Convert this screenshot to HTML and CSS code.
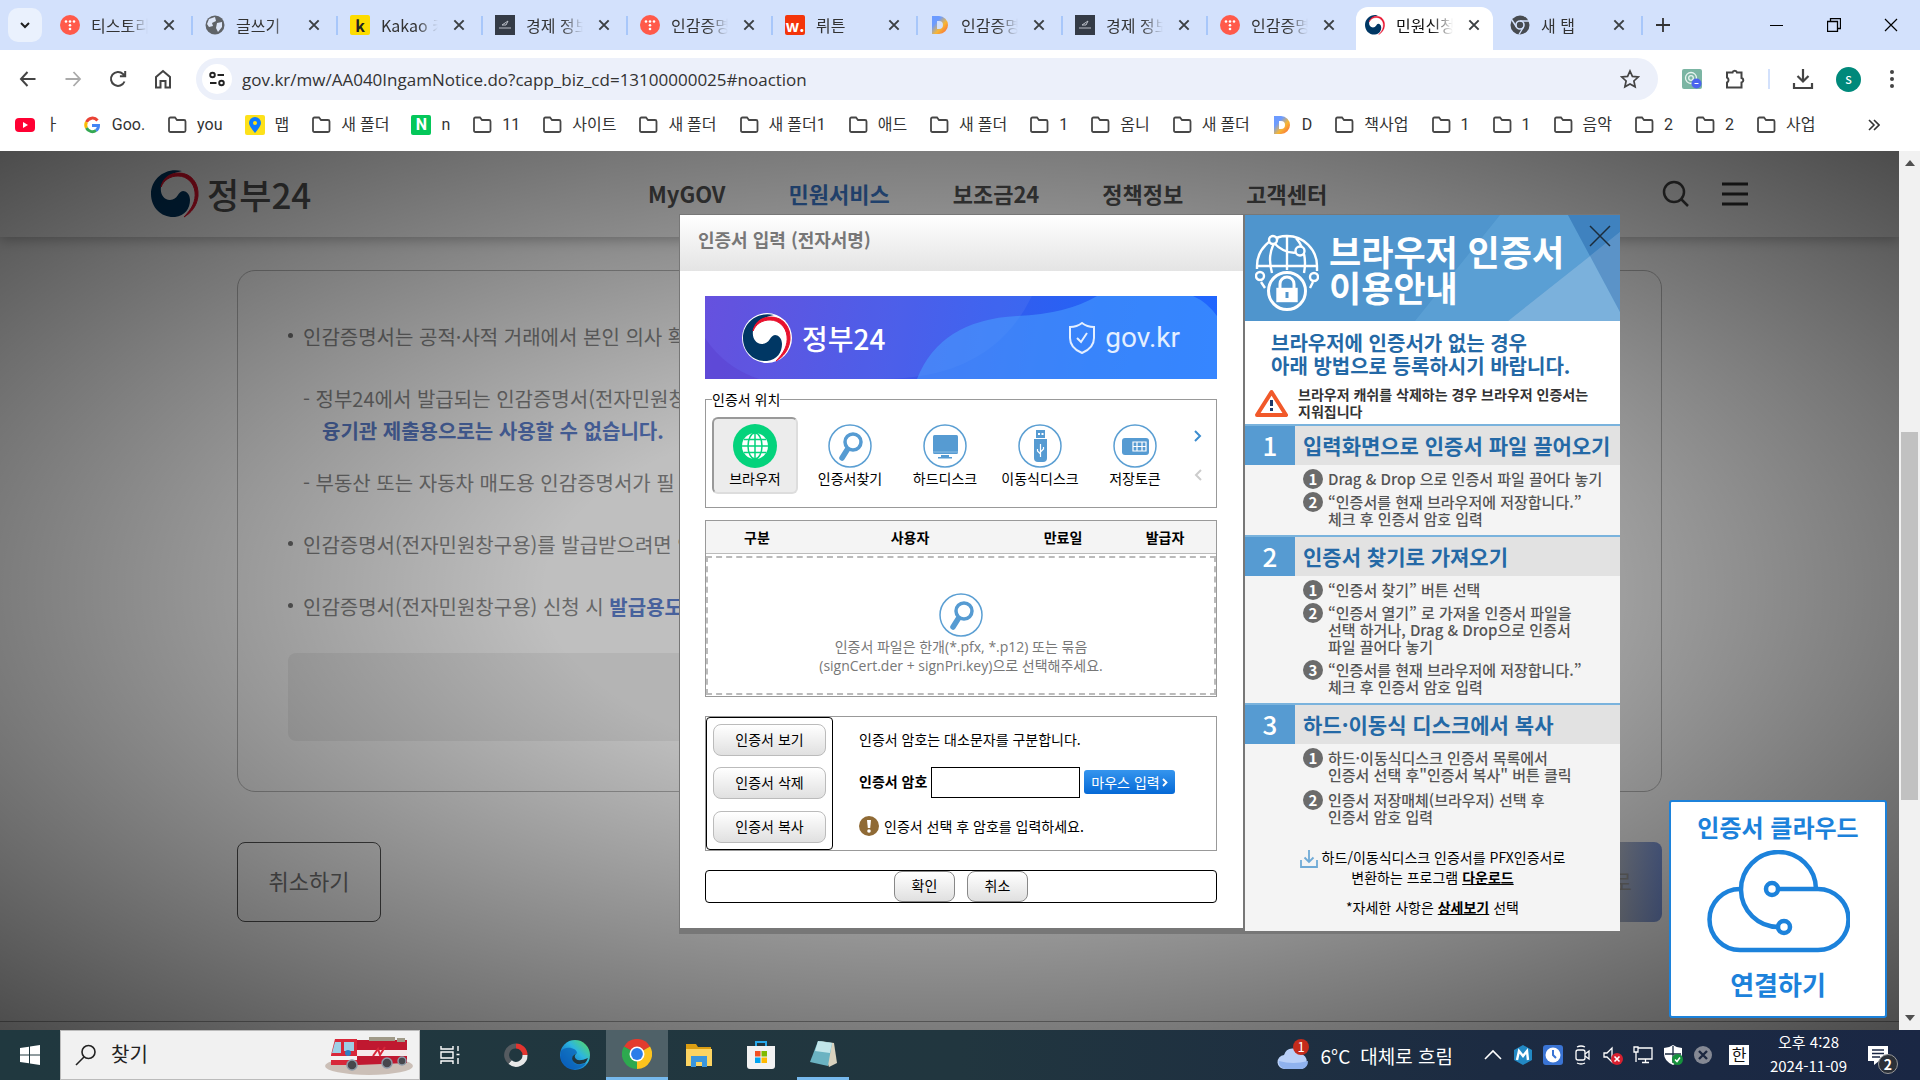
FILE: index.html
```html
<!DOCTYPE html>
<html lang="ko">
<head>
    <meta charset="UTF-8">
    <meta name="viewport" content="width=device-width, initial-scale=1.0">
    <title>민원신청 | 정부24</title>
    <link rel="stylesheet" href="styles.css">
</head>
<body>
    <!-- shared icons -->
    <svg class="defs" width="0" height="0">
        <defs>
            <linearGradient id="d-fill" x1="0" y1="0" x2="1" y2="1">
                <stop offset="0.3" stop-color="#6c9bff"/>
                <stop offset="0.6" stop-color="#f7b733"/>
                <stop offset="1" stop-color="#fc5c3c"/>
            </linearGradient>
            <linearGradient id="edge-fill" x1="0" y1="1" x2="1" y2="0">
                <stop offset="0.2" stop-color="#0c66c4"/>
                <stop offset="0.6" stop-color="#2cb5e0"/>
                <stop offset="1" stop-color="#5fe04f"/>
            </linearGradient>
        </defs>
        <symbol id="close" viewBox="0 0 12 12"><path d="M2 2l8 8M10 2l-8 8" stroke="#3c4043" stroke-width="1.7" fill="none"/></symbol>
        <symbol id="folder" viewBox="0 0 20 20"><path d="M2 4q0-1.500 1.500-1.500H8l2 2.500h7q1.500 0 1.500 1.500V15.500Q18.500 17 17 17H3.500Q2 17 2 15.500z" fill="none" stroke="#474747" stroke-width="1.8"/></symbol>
        <symbol id="tistory" viewBox="0 0 20 20"><circle cx="10" cy="10" r="10" fill="#ff5a4a"/><g fill="#fff"><circle cx="6" cy="6.500" r="1.300"/><circle cx="10" cy="6.500" r="1.300"/><circle cx="14" cy="6.500" r="1.300"/><circle cx="10" cy="10.300" r="1.300"/><circle cx="10" cy="14" r="1.300"/></g></symbol>
        <symbol id="photo" viewBox="0 0 20 20"><path d="M0 0h20v20H0z" fill="#343b46"/><path d="M7 10l3-2 3-2-2 4zM4 13h12" stroke="#b9bec6" stroke-width="1" fill="none"/></symbol>
        <symbol id="dletter" viewBox="0 0 20 20"><path d="M2 1h7a9 9 0 0 1 0 18H2zM7 6v8h2a4 4 0 0 0 0-8z" fill="url(#d-fill)" fill-rule="evenodd"/></symbol>
        <symbol id="gov" viewBox="0 0 48 48">
            <path d="M31 1C14-3 0 9 0 24c0 14 11 24 24 23 10-1 15-9 15-17 0-6-4-9-7-9-5 0-5 9-13 9-7 0-10-7-9-13C12 8 21 3 31 1z" fill="#003764"/>
            <path d="M10 17C12 7 20 3 28 3c12 0 20 10 19 23-1 10-7 17-14 21 8-8 12-16 11-25C43 13 36 6 27 6c-8 0-14 4-17 11z" fill="#e8112d" stroke="#e8112d"/>
        </symbol>
        <symbol id="find" viewBox="0 0 44 44"><circle cx="22" cy="22" r="21" fill="#fff" stroke="#5b9fd3" stroke-width="1.500"/><circle cx="25" cy="18" r="8" fill="none" stroke="#569bd2" stroke-width="3.500"/><path d="M19 26l-5 8" stroke="#569bd2" stroke-width="5.500" stroke-linecap="round"/></symbol>
        <symbol id="chrome" viewBox="0 0 32 32">
            <path d="M16 16L2.100 8A16 16 0 0 1 29.900 8z" fill="#e33b2e"/>
            <path d="M16 16L29.900 8A16 16 0 0 1 16 32z" fill="#fcc31e"/>
            <path d="M16 16V32A16 16 0 0 1 2.100 8z" fill="#2da94f"/>
            <circle cx="16" cy="16" r="8" fill="#fff"/><circle cx="16" cy="16" r="6.300" fill="#2b7de9"/>
        </symbol>
    </svg>

    <div class="tabs">
        <button class="tab-search" aria-label="탭 검색"><svg width="12" height="12" viewBox="0 0 12 12"><path d="M2 4l4 4 4-4" fill="none" stroke="#1f1f1f" stroke-width="2"/></svg></button>
        <div class="tab"><svg><use href="#tistory"/></svg><span>티스토리</span><button aria-label="닫기"><svg><use href="#close"/></svg></button></div>
        <div class="tab"><svg viewBox="0 0 20 20"><circle cx="10" cy="10" r="9.500" fill="#5f6368"/><path d="M4 4l6-2 1 4-4 2 1 3-4 1-2-3zM12 8l5-1v5l-4 5-2-4z" fill="#dde6f8"/></svg><span>글쓰기</span><button aria-label="닫기"><svg><use href="#close"/></svg></button></div>
        <div class="tab"><i class="fav fav-k">k</i><span>Kakao 카</span><button aria-label="닫기"><svg><use href="#close"/></svg></button></div>
        <div class="tab"><svg><use href="#photo"/></svg><span>경제 정보</span><button aria-label="닫기"><svg><use href="#close"/></svg></button></div>
        <div class="tab"><svg><use href="#tistory"/></svg><span>인감증명</span><button aria-label="닫기"><svg><use href="#close"/></svg></button></div>
        <div class="tab"><i class="fav fav-w">w.</i><span>뤼튼</span><button aria-label="닫기"><svg><use href="#close"/></svg></button></div>
        <div class="tab"><svg><use href="#dletter"/></svg><span>인감증명</span><button aria-label="닫기"><svg><use href="#close"/></svg></button></div>
        <div class="tab"><svg><use href="#photo"/></svg><span>경제 정보</span><button aria-label="닫기"><svg><use href="#close"/></svg></button></div>
        <div class="tab before-active"><svg><use href="#tistory"/></svg><span>인감증명</span><button aria-label="닫기"><svg><use href="#close"/></svg></button></div>
        <div class="tab active"><svg><use href="#gov"/></svg><span>민원신청</span><button aria-label="닫기"><svg><use href="#close"/></svg></button></div>
        <div class="tab"><svg viewBox="0 0 20 20"><circle cx="10" cy="10" r="9.500" fill="#474b50"/><circle cx="10" cy="10" r="4" fill="#474b50" stroke="#d3e1fc" stroke-width="1.600"/><path d="M10 6h9M6.500 12L2 5M13.500 12L9 19.500" stroke="#d3e1fc" stroke-width="1.400"/></svg><span>새 탭</span><button aria-label="닫기"><svg><use href="#close"/></svg></button></div>
        <button class="new-tab" aria-label="새 탭"><svg width="16" height="16" viewBox="0 0 16 16"><path d="M8 1v14M1 8h14" stroke="#333" stroke-width="1.800"/></svg></button>
        <div class="win-buttons">
            <button aria-label="최소화"><svg width="14" height="14"><path d="M0 7.500h13" stroke="#000"/></svg></button>
            <button aria-label="복원"><svg width="14" height="14"><path d="M.5 3.500h10v10H.5zM3.500 3.500v-3h10v10h-3" fill="none" stroke="#000" stroke-width="1.300"/></svg></button>
            <button aria-label="닫기"><svg width="14" height="14"><path d="M1 1l12 12M13 1L1 13" stroke="#000" stroke-width="1.200"/></svg></button>
        </div>
    </div>

    <div class="toolbar">
        <div class="nav-buttons">
            <button aria-label="뒤로"><svg width="20" height="20"><path d="M17.500 10H3M9.500 3L3 10l6.500 7" fill="none" stroke="#444" stroke-width="2"/></svg></button>
            <button aria-label="앞으로"><svg width="20" height="20"><path d="M2.500 10H17M10.500 3l6.500 7-6.500 7" fill="none" stroke="#aaa" stroke-width="1.800"/></svg></button>
            <button aria-label="새로고침"><svg width="20" height="20"><path d="M16.500 12.500A7 7 0 1 1 15 5l2 2M17.200 2v5.300h-5.300" fill="none" stroke="#444" stroke-width="2"/></svg></button>
            <button aria-label="홈"><svg width="20" height="20"><path d="M3 8l7-6 7 6v10.500h-4.500V12h-5v6.500H3z" fill="none" stroke="#444" stroke-width="2"/></svg></button>
        </div>
        <div class="address">
            <button class="site-info" aria-label="사이트 정보"><svg width="18" height="18" viewBox="0 0 18 18" fill="none" stroke="#222" stroke-width="1.900"><circle cx="4.500" cy="5" r="2.300"/><path d="M9.500 5H16M2 13h6.500"/><circle cx="13.500" cy="13" r="2.300"/></svg></button>
            <input type="text" aria-label="주소창" value="gov.kr/mw/AA040IngamNotice.do?capp_biz_cd=13100000025#noaction">
            <svg width="20" height="20" viewBox="0 0 20 20"><path d="M10 2l2.400 5.400 5.800.6-4.300 4 1.200 5.800L10 14.900l-5.100 2.900L6.100 12 1.800 8l5.800-.6z" fill="none" stroke="#444" stroke-width="1.700"/></svg>
        </div>
        <div class="extensions">
            <svg width="20" height="20"><rect width="20" height="20" rx="2" fill="#7bb5a3"/><g fill="none" stroke="#e9f5f1" stroke-width="1.300"><circle cx="9" cy="9" r="5.500"/><circle cx="9" cy="9" r="2.300"/></g><circle cx="14.500" cy="14.500" r="5" fill="#4c63ee"/><path d="M12.500 14.500h4" stroke="#fff"/></svg>
            <svg width="22" height="22" viewBox="0 0 22 22"><path d="M3 4.500h5.500a2.300 2.300 0 0 1 4.500 0h4.500V10a2.300 2.300 0 0 1 0 4.500v5H3v-5a2.800 2.800 0 0 0 0-5z" fill="none" stroke="#444" stroke-width="2"/></svg>
            <span class="bar"></span>
            <svg width="22" height="22"><path d="M11 1v12M5.500 8l5.500 5.500L16.500 8M2 15v5h18v-5" fill="none" stroke="#444" stroke-width="2.200"/></svg>
            <span class="avatar">s</span>
            <svg class="dots" width="4" height="20" fill="#444"><circle cx="2" cy="3" r="2"/><circle cx="2" cy="10" r="2"/><circle cx="2" cy="17" r="2"/></svg>
        </div>
    </div>

    <div class="bookmarks">
        <a href="#"><svg viewBox="0 0 20 20"><rect y="3" width="20" height="14" rx="4" fill="#f03"/><path d="M8 7l5 3-5 3z" fill="#fff"/></svg>ㅏ</a>
        <a href="#"><svg viewBox="0 0 20 20" fill="none" stroke-width="3"><path d="M15.500 5.500A6.500 6.500 0 0 0 4.500 7" stroke="#ea4335"/><path d="M4.500 7a6.500 6.500 0 0 0 0 6" stroke="#fbbc04"/><path d="M4.500 13a6.500 6.500 0 0 0 9.500 2.500" stroke="#34a853"/><path d="M14 15.500a6 6 0 0 0 2.500-5H10" stroke="#4285f4"/></svg>Goo.</a>
        <a href="#"><svg><use href="#folder"/></svg>you</a>
        <a href="#"><svg viewBox="0 0 20 20"><rect width="20" height="20" rx="2" fill="#fde11a"/><path d="M10 18Q4 11 4 8a6 6 0 0 1 12 0q0 3-6 10z" fill="#0b7bff"/><circle cx="10" cy="8" r="2" fill="#fde11a"/></svg>맵</a>
        <a href="#"><svg><use href="#folder"/></svg>새 폴더</a>
        <a href="#"><i class="fav fav-n">N</i>n</a>
        <a href="#"><svg><use href="#folder"/></svg>11</a>
        <a href="#"><svg><use href="#folder"/></svg>사이트</a>
        <a href="#"><svg><use href="#folder"/></svg>새 폴더</a>
        <a href="#"><svg><use href="#folder"/></svg>새 폴더1</a>
        <a href="#"><svg><use href="#folder"/></svg>애드</a>
        <a href="#"><svg><use href="#folder"/></svg>새 폴더</a>
        <a href="#"><svg><use href="#folder"/></svg>1</a>
        <a href="#"><svg><use href="#folder"/></svg>옴니</a>
        <a href="#"><svg><use href="#folder"/></svg>새 폴더</a>
        <a href="#"><svg><use href="#dletter"/></svg>D</a>
        <a href="#"><svg><use href="#folder"/></svg>책사업</a>
        <a href="#"><svg><use href="#folder"/></svg>1</a>
        <a href="#"><svg><use href="#folder"/></svg>1</a>
        <a href="#"><svg><use href="#folder"/></svg>음악</a>
        <a href="#"><svg><use href="#folder"/></svg>2</a>
        <a href="#"><svg><use href="#folder"/></svg>2</a>
        <a href="#"><svg><use href="#folder"/></svg>사업</a>
        <button class="more" aria-label="북마크 더보기"><svg width="12" height="12"><path d="M1 1l5 5-5 5M6 1l5 5-5 5" fill="none" stroke="#333" stroke-width="1.600"/></svg></button>
    </div>

    <main class="viewport">
        <div class="page">
            <header class="site-header">
                <a class="logo" href="#"><svg width="48" height="48"><use href="#gov"/></svg>정부24</a>
                <nav>
                    <a href="#">MyGOV</a>
                    <a href="#" class="on">민원서비스</a>
                    <a href="#">보조금24</a>
                    <a href="#">정책정보</a>
                    <a href="#">고객센터</a>
                </nav>
                <div class="site-tools">
                    <button aria-label="검색"><svg width="28" height="28" fill="none" stroke="#444" stroke-width="2.500"><circle cx="12" cy="12" r="10"/><path d="M19 19l7 7"/></svg></button>
                    <button aria-label="전체메뉴"><svg width="26" height="26" stroke="#333" stroke-width="3"><path d="M0 3h26M0 13h26M0 23h26"/></svg></button>
                </div>
            </header>
            <section class="notice">
                <ul>
                    <li>인감증명서는 공적·사적 거래에서 본인 의사 확
                        <ul>
                            <li>- 정부24에서 발급되는 인감증명서(전자민원창<br><b>융기관 제출용으로는 사용할 수 없습니다.</b></li>
                            <li>- 부동산 또는 자동차 매도용 인감증명서가 필</li>
                        </ul>
                    </li>
                    <li>인감증명서(전자민원창구용)를 발급받으려면 인</li>
                    <li>인감증명서(전자민원창구용) 신청 시 <b>발급용도</b></li>
                </ul>
                <div class="agree"></div>
            </section>
            <div class="page-buttons">
                <button class="cancel">취소하기</button>
                <button class="next">로</button>
            </div>
            <footer class="site-footer"></footer>
            <div class="dim"></div>
        </div>
        <div class="scrollbar">
            <svg width="10" height="6"><path d="M0 6l5-6 5 6z" fill="#505050"/></svg>
            <div class="track"><div class="thumb"></div></div>
            <svg width="10" height="6"><path d="M0 0l5 6 5-6z" fill="#505050"/></svg>
        </div>

        <div class="popup">
            <div class="cert">
                <h1>인증서 입력 (전자서명)</h1>
                <div class="cert-body">
                    <div class="banner">
                        <svg class="banner-bg" viewBox="0 0 512 83" preserveAspectRatio="none">
                            <path d="M0 0h327q-40 83-150 83H0z" fill="#fff" opacity="0.06"/>
                            <path d="M0 42q20 30 54 41H0z" fill="#5a3fd0" opacity="0.5"/>
                            <path d="M212 83Q235 24 312 20q50-2 80-20h96q14 6 24 20v63z" fill="#48a0ff" opacity="0.55"/>
                        </svg>
                        <span class="banner-logo"><i><svg width="48" height="48"><use href="#gov"/></svg></i>정부24</span>
                        <span class="banner-url"><svg width="26" height="32" viewBox="0 0 26 32" fill="none" stroke="#e4efff" stroke-width="2"><path d="M13 1q5 4 12 4v11q0 10-12 15Q1 26 1 16V5q7 0 12-4zM8 16l4 4 6-9"/></svg>gov.kr</span>
                    </div>

                    <fieldset class="places">
                        <legend>인증서 위치</legend>
                        <button class="place selected"><svg width="44" height="44" viewBox="0 0 44 44"><circle cx="22" cy="22" r="22" fill="#04d37c"/><circle cx="22" cy="22" r="13" fill="#fff"/><g fill="none" stroke="#04d37c" stroke-width="1.500"><ellipse cx="22" cy="22" rx="7" ry="13"/><path d="M22 9v26M9 22h26M11 15.500h22M11 28.500h22"/></g></svg>브라우저</button>
                        <button class="place"><svg width="44" height="44"><use href="#find"/></svg>인증서찾기</button>
                        <button class="place"><svg width="44" height="44" viewBox="0 0 44 44"><circle cx="22" cy="22" r="21" fill="#fff" stroke="#5b9fd3" stroke-width="1.500"/><rect x="10" y="11" width="25" height="19" rx="1.500" fill="#569bd2"/><path d="M10 28h25" stroke="#8fc0e6" stroke-width="1"/><path d="M18 31h8v2h3v1.500H15V33h3z" fill="#569bd2"/></svg>하드디스크</button>
                        <button class="place"><svg width="44" height="44" viewBox="0 0 44 44"><circle cx="22" cy="22" r="21" fill="#fff" stroke="#5b9fd3" stroke-width="1.500"/><path d="M18 6h9v8h-9z" fill="#569bd2"/><path d="M20 9h2v2h-2zM23.500 9h2v2h-2z" fill="#fff"/><path d="M16 15h13v19q0 4-4 4h-5q-4 0-4-4z" fill="#569bd2"/><path d="M22.500 20v13M22.500 30l-3-3v-2M22.500 28l3-3v-2" stroke="#fff" stroke-width="1.200" fill="none"/></svg>이동식디스크</button>
                        <button class="place"><svg width="44" height="44" viewBox="0 0 44 44"><circle cx="22" cy="22" r="21" fill="#fff" stroke="#5b9fd3" stroke-width="1.500"/><rect x="9" y="14" width="27" height="17" rx="3" fill="#569bd2"/><path d="M20 18h13v9H20zM24 18v9M29 18v9M20 22.500h13" stroke="#fff" stroke-width="1.200" fill="none"/></svg>저장토큰</button>
                        <div class="arrows">
                            <button aria-label="다음"><svg width="8" height="12"><path d="M1 1l5 5-5 5" fill="none" stroke="#3b8ccf" stroke-width="2"/></svg></button>
                            <button aria-label="이전"><svg width="8" height="12"><path d="M7 1L2 6l5 5" fill="none" stroke="#ccc" stroke-width="2"/></svg></button>
                        </div>
                    </fieldset>

                    <div class="cert-list">
                        <table>
                            <thead>
                                <tr><th class="c1">구분</th><th class="c2">사용자</th><th class="c1">만료일</th><th class="c1">발급자</th></tr>
                            </thead>
                        </table>
                        <div class="drop">
                            <svg width="44" height="44"><use href="#find"/></svg>
                            <p>인증서 파일은 한개(*.pfx, *.p12) 또는 묶음<br>(signCert.der + signPri.key)으로 선택해주세요.</p>
                        </div>
                    </div>

                    <div class="password">
                        <div class="cert-actions">
                            <button>인증서 보기</button>
                            <button>인증서 삭제</button>
                            <button>인증서 복사</button>
                        </div>
                        <div class="password-form">
                            <p>인증서 암호는 대소문자를 구분합니다.</p>
                            <div class="password-row">
                                <label for="cert-pw">인증서 암호</label>
                                <input type="password" id="cert-pw">
                                <button>마우스 입력<svg width="6" height="9"><path d="M1 1l3.500 3.500L1 8" fill="none" stroke="#fff" stroke-width="1.800"/></svg></button>
                            </div>
                            <p class="tip"><svg width="20" height="20"><circle cx="10" cy="10" r="10" fill="#8f6a35"/><path d="M8 4h4l-.8 8H8.800z" fill="#fff"/><circle cx="10" cy="15" r="1.800" fill="#fff"/></svg>인증서 선택 후 암호를 입력하세요.</p>
                        </div>
                    </div>

                    <div class="confirm">
                        <button>확인</button>
                        <button>취소</button>
                    </div>
                </div>
            </div>

            <aside class="guide">
                <div class="guide-top">
                    <svg class="guide-bg" viewBox="0 0 375 106" preserveAspectRatio="none">
                        <path d="M255 0h68l22 41-82 65H170z" fill="#66a9dc" opacity="0.5"/>
                        <path d="M323 0h52v17l-30 24z" fill="#3f82bf"/>
                        <path d="M345 41l30-24v80z" fill="#5b93c8"/>
                        <path d="M263 106l82-65 30 56v9z" fill="#7bb1dc"/>
                    </svg>
                    <svg class="guide-icon" width="64" height="78" viewBox="0 0 64 78" fill="none" stroke="#fff" stroke-width="2.400">
                        <path d="M2 36V33A30 30 0 0 1 62 33V38M2 33h60M32 3v34M18 9Q32 24 48 18M23 5q-12 14-6 35M41 5q12 14 8 35M6 49l4 6M58 49l-3 6"/>
                        <circle cx="18" cy="7" r="4" fill="#4f95cd"/><circle cx="45" cy="18" r="4.500" fill="#4f95cd"/><circle cx="5" cy="43" r="4" fill="#4f95cd"/><circle cx="59" cy="44" r="4" fill="#4f95cd"/>
                        <circle cx="32" cy="58" r="18.500" fill="#4f95cd" stroke-width="3"/>
                        <path d="M25 56v-5a7 7 0 0 1 14 0v5" stroke-width="3"/><rect x="22.500" y="56" width="19" height="12" fill="#fff"/><path d="M32 59v6" stroke="#4f95cd" stroke-width="3"/>
                    </svg>
                    <h2>브라우저 인증서<br>이용안내</h2>
                    <button class="guide-close" aria-label="닫기"><svg width="22" height="22"><path d="M1 1l20 20M21 1L1 21" stroke="#1b2c3c" stroke-width="1.500"/></svg></button>
                </div>
                <div class="guide-intro">
                    <h3>브라우저에 인증서가 없는 경우<br>아래 방법으로 등록하시기 바랍니다.</h3>
                    <div class="warn">
                        <svg width="33" height="28" viewBox="0 0 33 28"><path d="M16.500 3L31 26H2z" fill="#fff" stroke="#f1592a" stroke-width="4" stroke-linejoin="round"/><path d="M16.500 11v6M16.500 19v3" stroke="#1b3a6b" stroke-width="3"/></svg>
                        <p>브라우저 캐쉬를 삭제하는 경우 브라우저 인증서는<br>지워집니다</p>
                    </div>
                </div>
                <h4><i>1</i>입력화면으로 인증서 파일 끌어오기</h4>
                <ol>
                    <li><i>1</i>Drag &amp; Drop 으로 인증서 파일 끌어다 놓기</li>
                    <li><i>2</i>“인증서를 현재 브라우저에 저장합니다.”<br>체크 후 인증서 암호 입력</li>
                </ol>
                <h4><i>2</i>인증서 찾기로 가져오기</h4>
                <ol>
                    <li><i>1</i>“인증서 찾기” 버튼 선택</li>
                    <li><i>2</i>“인증서 열기” 로 가져올 인증서 파일을<br>선택 하거나, Drag &amp; Drop으로 인증서<br>파일 끌어다 놓기</li>
                    <li><i>3</i>“인증서를 현재 브라우저에 저장합니다.”<br>체크 후 인증서 암호 입력</li>
                </ol>
                <h4><i>3</i>하드·이동식 디스크에서 복사</h4>
                <ol class="last">
                    <li><i>1</i>하드·이동식디스크 인증서 목록에서<br>인증서 선택 후"인증서 복사" 버튼 클릭</li>
                    <li><i>2</i>인증서 저장매체(브라우저) 선택 후<br>인증서 암호 입력</li>
                </ol>
                <div class="guide-foot">
                    <p><svg width="18" height="18"><path d="M9 0v12M4.500 7.500L9 12l4.500-4.500M1 10v7h16v-7" fill="none" stroke="#6faad6" stroke-width="1.800"/></svg> 하드/이동식디스크 인증서를 PFX인증서로<br>변환하는 프로그램 <a href="#">다운로드</a></p>
                    <p>*자세한 사항은 <a href="#">상세보기</a> 선택</p>
                </div>
            </aside>
        </div>

        <a class="cloud" href="#">
            <span>인증서 클라우드</span>
            <svg width="144" height="104" viewBox="0 0 144 104" fill="none" stroke="#1c82db" stroke-width="4.500">
                <path d="M34 39a30 30 0 0 0 0 61h78a30 30 0 0 0 0-61H72"/>
                <path d="M110 39a37.500 37.500 0 1 0-37 38"/>
                <circle cx="66" cy="39" r="6" fill="#fff"/>
                <circle cx="78" cy="77" r="6" fill="#fff"/>
            </svg>
            <span class="big">연결하기</span>
        </a>
    </main>

    <div class="taskbar">
        <button class="start" aria-label="시작"><svg width="20" height="20" fill="#fff"><path d="M0 3l9-1.300V9.500H0zM10 1.500L20 0v9.500H10zM0 10.500h9v7.800L0 17zM10 10.500h10V20l-10-1.500z"/></svg></button>
        <label class="search"><svg width="22" height="22" fill="none" stroke="#222" stroke-width="1.600"><circle cx="13.500" cy="8" r="6.500"/><path d="M9 13l-8 8"/></svg><input type="text" placeholder="찾기" aria-label="찾기">
            <svg width="92" height="40" viewBox="0 0 92 40">
                <ellipse cx="46" cy="31" rx="44" ry="9" fill="#cbbfb7"/>
                <path d="M12 4h22v26H8V20z" fill="#d8283a"/><path d="M34 5h50v23l-50 2z" fill="#c01830"/>
                <path d="M34 15h50v6H34z" fill="#f5e9ea"/><path d="M12 7h6v11H9zM21 7h10v9H21z" fill="#9ed0e6"/>
                <path d="M8 21h26v4H8z" fill="#f4f4f4"/><path d="M46 2h26v4H46zM74 3h8v4h-8z" fill="#a09a88"/>
                <circle cx="25" cy="18" r="3" fill="#2f7fc4"/><path d="M50 21l5-7 2 6 5-8" stroke="#d8283a" stroke-width="2" fill="none"/>
                <g fill="#47474d" stroke="#8d9aa8" stroke-width="1.500"><circle cx="29" cy="30" r="5"/><circle cx="64" cy="28" r="5"/><circle cx="79" cy="26" r="4"/></g>
            </svg>
        </label>
        <button class="app"><svg width="22" height="22" fill="none" stroke="#fff" stroke-width="1.400"><path d="M1 2v3h12V2M1 20v-3h12v3M1 8h12v6H1zM18 2v5M18 14v6M16.500 10.500h3"/></svg></button>
        <button class="app ring"><svg width="28" height="28" viewBox="0 0 28 28" fill="none" stroke-width="5"><path d="M14 5a9 9 0 0 1 9 9" stroke="#e3342f"/><path d="M23 14a9 9 0 0 1-15 7" stroke="#e8e8e8"/><path d="M8 21A9 9 0 0 1 14 5" stroke="#555b60"/></svg></button>
        <button class="app"><svg width="30" height="30" viewBox="0 0 30 30"><circle cx="15" cy="15" r="15" fill="url(#edge-fill)"/><path d="M1 11C6 5 17 8 17 13q-6 2-4 8t13 2C22 31 5 32 1 19z" fill="#0b62b8" opacity="0.75"/><path d="M17 13q-4 3-1 6t12-1q-1 3-3 5-9 3-12-2t4-8z" fill="#21363f"/></svg></button>
        <button class="app open current"><svg width="30" height="30"><use href="#chrome"/></svg></button>
        <button class="app"><svg width="28" height="28" viewBox="0 0 28 28"><path d="M1 3h10l2 3h13v4H1z" fill="#dc9e12"/><path d="M1 8h26v17H1z" fill="#fcd462"/><path d="M6 26V15h16v11h-5v-5h-6v5z" fill="#3a96dd"/></svg></button>
        <button class="app"><svg width="30" height="30" viewBox="0 0 30 30"><path d="M10 6V2h10v4" fill="none" stroke="#28a8ea" stroke-width="2"/><path d="M1 6h28v20q0 3-3 3H4q-3 0-3-3z" fill="#f2f2f2"/><path d="M9 11h5.500v5.500H9z" fill="#f25022"/><path d="M15.500 11H21v5.500h-5.500z" fill="#7fba00"/><path d="M9 17.500h5.500V23H9z" fill="#00a4ef"/><path d="M15.500 17.500H21V23h-5.500z" fill="#ffb900"/></svg></button>
        <button class="app open note"><svg width="30" height="28" viewBox="0 0 30 28"><path d="M12 1l14 2 3 20-8 4z" fill="#d9d2be"/><path d="M10 1l14 2-4 23-18-4z" fill="#6bb3c2"/><path d="M10 1l14 2-2 10-15-2z" fill="#c2e6ea"/></svg></button>

        <div class="weather"><svg width="34" height="34" viewBox="0 0 34 34"><path d="M8 31a7 7 0 0 1-1-14 9 9 0 0 1 17-1 8 8 0 0 1 1 15z" fill="#b9d0f8"/><path d="M8 31a7 7 0 0 1-6-8q14 4 29 0a8 8 0 0 1-6 8z" fill="#8fb2ee"/><circle cx="24" cy="9" r="8" fill="#c42b1c"/><text x="24" y="14" font-size="13" text-anchor="middle" fill="#fff">1</text></svg><span>6°C</span><span>대체로 흐림</span></div>
        <div class="tray">
            <svg width="20" height="20"><path d="M2 14l8-8 8 8" fill="none" stroke="#fff" stroke-width="1.600"/></svg>
            <svg width="20" height="20"><path d="M10 0l9 5v10l-9 5-9-5V5z" fill="#2289c4"/><path d="M4 15l2-9 4 5 4-5 1 9" fill="none" stroke="#fff" stroke-width="2.400"/></svg>
            <svg width="20" height="20"><rect width="20" height="20" rx="3" fill="#3a74d4"/><circle cx="10" cy="10" r="7.500" fill="#fff"/><path d="M10 5v5l3 3" fill="none" stroke="#3a74d4" stroke-width="2"/></svg>
            <svg width="20" height="20" fill="none" stroke="#fff" stroke-width="1.300"><rect x="3" y="5" width="9" height="10" rx="2"/><path d="M12 9l4-3v8l-4-3M4 2q4-2 8 0M4 18q4 2 8 0"/></svg>
            <svg width="20" height="20"><path d="M1 8h3l5-5v14l-5-5H1z" fill="none" stroke="#fff" stroke-width="1.300"/><circle cx="14" cy="14" r="6" fill="#d8202f"/><path d="M11.500 11.500l5 5M16.500 11.500l-5 5" stroke="#fff" stroke-width="1.600"/></svg>
            <svg width="20" height="20" fill="none" stroke="#fff" stroke-width="1.300"><path d="M5 3h14v11H5M9 17.500h7M12.500 14v3.500M1 2h4v5H1zM3 7v10"/></svg>
            <svg width="20" height="20"><path d="M10 0q4 3 9 3v6q0 7-9 11Q1 16 1 9V3q5 0 9-3z" fill="#fff"/><path d="M10 1v17M2 9h16" stroke="#1c2c42" stroke-width="1.300"/><circle cx="14.500" cy="14.500" r="5.500" fill="#16923c"/><path d="M12 14.500l2 2 3-4" stroke="#fff" stroke-width="1.500" fill="none"/></svg>
            <svg width="20" height="20"><circle cx="10" cy="10" r="9" fill="#858994"/><path d="M6 6l8 8M14 6l-8 8" stroke="#1c2740" stroke-width="2.400"/></svg>
        </div>
        <span class="ime">한</span>
        <div class="clock">오후 4:28<br>2024-11-09</div>
        <button class="alarm" aria-label="알림"><svg width="20" height="20"><path d="M0 1h20v15h-9l-5 4v-4H0z" fill="#fff"/><path d="M4 5h12M4 8.500h12M4 12h8" stroke="#1a2744" stroke-width="1.400"/></svg><b>2</b></button>
    </div>
</body>
</html>
```
FILE: styles.css
```css
* {
    margin: 0;
    padding: 0;
    box-sizing: border-box;
}

body {
    display: flex;
    flex-direction: column;
    height: 100vh;
    overflow: hidden;
    font-family: "Noto Sans CJK KR", sans-serif;
    font-size: 14px;
    color: #000;
    background: #fff;
}

button {
    border: none;
    background: none;
    font: inherit;
    color: inherit;
}

input {
    font: inherit;
    border: none;
}

a {
    color: inherit;
    text-decoration: none;
}

ul, ol {
    list-style: none;
}

i {
    font-style: normal;
}

svg {
    display: block;
    flex: none;
}

.defs {
    position: absolute;
}

/* browser tabs */
.tabs {
    display: flex;
    height: 50px;
    background: #d3e1fc;
    font-size: 16px;
    color: #333;
}

.tab-search {
    width: 34px;
    height: 34px;
    margin: 8px 6px 0 8px;
    padding: 11px;
    border-radius: 10px;
    background: #eaf1fd;
}

.tab {
    position: relative;
    display: flex;
    align-items: center;
    width: 145px;
    padding-left: 12px;
}

.tab::after {
    content: "";
    position: absolute;
    right: 0;
    top: 16px;
    width: 2px;
    height: 19px;
    background: #a8c7fa;
}

.tab > svg,
.fav {
    width: 20px;
    height: 20px;
}

.tab span {
    width: 60px;
    height: 24px;
    margin-left: 11px;
    line-height: 24px;
    overflow: hidden;
    white-space: nowrap;
    mask-image: linear-gradient(to right, #000 60%, transparent 95%);
}

.tab button {
    margin-left: 11px;
}

.tab button svg {
    width: 14px;
    height: 14px;
}

.tab.active {
    width: 137px;
    margin: 7px 5px 0 3px;
    padding: 0 0 7px 9px;
    border-radius: 12px 12px 0 0;
    background: #fff;
    color: #111;
}

.tab.active::after,
.tab.before-active::after {
    display: none;
}

.fav {
    flex: none;
    line-height: 20px;
    text-align: center;
    font-weight: 700;
    border-radius: 2px;
}

.fav-k {
    background: #fddc00;
    color: #222;
}

.fav-w {
    background: #f4350a;
    color: #fff;
}

.fav-n {
    background: #04c75a;
    color: #fff;
}

.new-tab {
    padding: 0 12px;
}

.win-buttons {
    display: flex;
    margin-left: auto;
}

.win-buttons button {
    width: 57px;
    padding-left: 21px;
}

/* toolbar */
.toolbar {
    display: flex;
    align-items: center;
    height: 58px;
    padding: 0 26px 0 18px;
}

.nav-buttons {
    display: flex;
    gap: 25px;
    width: 178px;
}

.address {
    display: flex;
    align-items: center;
    flex: 1;
    height: 42px;
    padding: 0 18px 0 6px;
    border-radius: 21px;
    background: #ecf0fa;
}

.site-info {
    width: 30px;
    height: 30px;
    padding: 6px;
    border-radius: 50%;
    background: #fff;
}

.address input {
    flex: 1;
    margin-left: 10px;
    height: 30px;
    background: none;
    font-family: "Open Sans", sans-serif;
    font-size: 17px;
    color: #333;
}

.extensions {
    display: flex;
    align-items: center;
    gap: 22px;
    margin-left: 24px;
}

.bar {
    width: 2px;
    height: 20px;
    background: #d3e1fc;
}

.avatar {
    width: 25px;
    height: 25px;
    margin-right: 7px;
    border-radius: 50%;
    background: #00897b;
    color: #fff;
    font-size: 14px;
    line-height: 22px;
    text-align: center;
}

/* bookmarks bar */
.bookmarks {
    display: flex;
    align-items: center;
    gap: 22px;
    height: 43px;
    padding: 0 40px 10px 15px;
    font-family: Roboto, "Noto Sans CJK KR", sans-serif;
    font-size: 16px;
    color: #333;
    white-space: nowrap;
}

.bookmarks a {
    display: flex;
    align-items: center;
    gap: 10px;
    line-height: 24px;
}

.bookmarks a svg {
    width: 20px;
    height: 20px;
}

.more {
    margin-left: auto;
}

/* web page behind the popup */
.viewport {
    position: relative;
    display: flex;
    flex: 1;
    min-height: 0;
}

.page {
    position: relative;
    flex: 1;
    overflow: hidden;
    white-space: nowrap;
}

.dim {
    position: absolute;
    inset: 0;
    background: radial-gradient(ellipse farthest-corner, rgba(0, 0, 0, 0.25) 30%, rgba(0, 0, 0, 0.7) 100%);
}

.site-header {
    display: flex;
    align-items: center;
    height: 86px;
    padding: 0 151px;
    box-shadow: 0 3px 12px rgba(0, 0, 0, 0.25);
    color: #555;
    font-weight: 700;
}

.logo {
    display: flex;
    align-items: center;
    gap: 8px;
    width: 497px;
    font-size: 35px;
    line-height: 44px;
    font-weight: 500;
}

nav {
    display: flex;
    gap: 63px;
    padding-bottom: 3px;
    font-size: 22px;
    line-height: 32px;
}

nav .on {
    color: #3c78c8;
}

.site-tools {
    display: flex;
    align-items: center;
    gap: 32px;
    margin-left: auto;
}

.notice {
    height: 522px;
    margin: 33px 237px 0;
    padding: 50px;
    border: 1px solid #bbb;
    border-radius: 18px;
    font-size: 20px;
    line-height: 32px;
    color: #8a8a8a;
}

.notice > ul > li {
    position: relative;
    padding-left: 15px;
    margin-bottom: 30px;
}

.notice > ul > li::before {
    content: "";
    position: absolute;
    left: 0;
    top: 12px;
    width: 5px;
    height: 5px;
    border-radius: 50%;
    background: #777;
}

.notice li li {
    margin-top: 30px;
}

.notice li li + li {
    margin-top: 20px;
}

.notice b {
    color: #5f82d0;
}

.notice li li b {
    margin-left: 19px;
}

.agree {
    height: 88px;
    border-radius: 8px;
    background: #f0f0f0;
}

.page-buttons {
    display: flex;
    justify-content: space-between;
    margin: 50px 237px 0;
    font-size: 22px;
}

.page-buttons button {
    height: 80px;
    padding-bottom: 4px;
    border-radius: 8px;
}

.cancel {
    width: 144px;
    border: 1px solid #555;
    color: #777;
}

.page-buttons .next {
    width: 144px;
    padding-right: 30px;
    background: linear-gradient(90deg, #b4bccd 70%, #7e9ae0);
    color: #999;
    text-align: right;
}

.site-footer {
    margin-top: 99px;
    height: 40px;
    border-top: 1px solid #aaa;
}

.scrollbar {
    display: flex;
    flex-direction: column;
    align-items: center;
    width: 21px;
    padding: 9px 0;
    background: #f1f1f1;
}

.track {
    flex: 1;
    padding-top: 266px;
}

.thumb {
    width: 17px;
    height: 368px;
    background: #c1c1c1;
}

/* certificate popup */
.popup {
    position: absolute;
    top: 63px;
    left: calc(50% - 281px);
    display: flex;
    align-items: flex-start;
    border-left: 1px solid #777;
    border-top: 1px solid #777;
}

.cert {
    width: 565px;
    background: #fff;
    border-right: 2px solid #777;
    border-bottom: 6px solid #777;
}

.cert h1 {
    height: 56px;
    padding: 10px 18px;
    font-size: 18px;
    line-height: 28px;
    color: #777;
    background: linear-gradient(#fff, #e4e4e4);
}

.cert-body {
    padding: 25px 26px 25px 25px;
}

.banner {
    position: relative;
    display: flex;
    align-items: center;
    justify-content: space-between;
    height: 83px;
    padding: 0 37px;
    background: linear-gradient(100deg, #5d47dc, #2563f5 75%, #1f66ff);
    color: #fff;
}

.banner-bg {
    position: absolute;
    inset: 0;
    width: 100%;
    height: 100%;
}

.banner-logo,
.banner-url {
    position: relative;
    display: flex;
    align-items: center;
    gap: 10px;
    font-size: 28px;
    line-height: 40px;
    font-weight: 500;
}

.banner-logo i {
    padding: 1px;
    border-radius: 50%;
    background: #fff;
}

.banner-url {
    font-family: Roboto, sans-serif;
    font-weight: 400;
    color: #e4efff;
}

.places {
    display: flex;
    height: 120px;
    margin-top: 9px;
    padding: 7px 6px;
    border: 1px solid #999;
    gap: 9px;
}

.places legend {
    padding: 0;
    line-height: 22px;
}

.place {
    display: flex;
    flex-direction: column;
    align-items: center;
    width: 86px;
    height: 77px;
    padding-top: 5px;
    border: 2px solid transparent;
    border-radius: 6px;
    line-height: 21px;
    white-space: nowrap;
}

.place.selected {
    border-color: #999 #ddd #ddd #999;
    background: #ececec;
}

.arrows {
    display: flex;
    flex-direction: column;
    gap: 27px;
    padding: 13px 0 0 7px;
}

.arrows button {
    height: 12px;
}

.cert-list {
    margin-top: 12px;
    border: 1px solid #999;
}

.cert-list table {
    width: 100%;
    border-collapse: collapse;
    background: #f4f4f4;
    border-bottom: 1px solid #bbb;
}

.cert-list th {
    height: 32px;
    line-height: 22px;
}

.c1 {
    width: 20%;
}

.c2 {
    width: 40%;
}

.drop {
    display: flex;
    flex-direction: column;
    align-items: center;
    height: 139px;
    margin: 2px 0 1px;
    padding-top: 35px;
    border: 2px dashed #bbb;
    font-family: "Open Sans", "Noto Sans CJK KR", sans-serif;
    font-size: 14px;
    line-height: 19px;
    color: #777;
    text-align: center;
}

.password {
    display: flex;
    height: 135px;
    margin-top: 19px;
    border: 1px solid #999;
}

.cert-actions {
    display: flex;
    flex-direction: column;
    justify-content: space-between;
    width: 127px;
    padding: 6px;
    border: 1px solid #000;
    border-radius: 4px;
}

.cert-actions button,
.confirm button {
    height: 32px;
    padding-bottom: 2px;
    border: 1px solid #bbb;
    border-radius: 8px;
    background: linear-gradient(#fff, #e0e0e0);
    line-height: 22px;
}

.password-form {
    display: flex;
    flex-direction: column;
    justify-content: space-between;
    padding: 11px 0 13px 26px;
    line-height: 22px;
}

.password-row {
    display: flex;
    align-items: center;
    gap: 4px;
}

.password-row label {
    padding-bottom: 2px;
    font-weight: 700;
}

.password-row input {
    width: 149px;
    height: 31px;
    border: 1px solid #000;
}

.password-row button {
    display: flex;
    align-items: center;
    gap: 2px;
    height: 24px;
    padding: 0 7px;
    border-radius: 3px;
    background: linear-gradient(#3595ee, #0569d6);
    color: #fff;
}

.tip {
    display: flex;
    align-items: center;
    gap: 5px;
}

.confirm {
    display: flex;
    justify-content: center;
    gap: 12px;
    margin-top: 19px;
    border: 1px solid #000;
    border-radius: 4px;
}

.confirm button {
    width: 61px;
    height: 31px;
    border-color: #888;
}

/* guide panel */
.guide {
    width: 375px;
    padding-bottom: 15px;
    background: #f4f4f4;
    border-bottom: 3px solid #777;
}

.guide-top {
    position: relative;
    display: flex;
    height: 106px;
    padding: 18px 10px;
    gap: 10px;
    background: #4f95cd;
    color: #fff;
}

.guide-bg {
    position: absolute;
    inset: 0;
    width: 100%;
    height: 106px;
}

.guide-icon,
.guide-top h2 {
    position: relative;
}

.guide-top h2 {
    font-size: 35px;
    line-height: 36px;
    white-space: nowrap;
}

.guide-close {
    position: absolute;
    right: 9px;
    top: 10px;
}

.guide-intro {
    height: 103px;
    padding: 10px 10px 0;
    background: #fff;
}

.guide-intro h3 {
    margin-left: 16px;
    font-size: 20px;
    line-height: 23px;
    color: #2469a6;
}

.warn {
    display: flex;
    gap: 10px;
    align-items: center;
    margin-top: 9px;
    font-weight: 700;
    line-height: 17px;
    color: #333;
    white-space: nowrap;
}

.guide h4 {
    display: flex;
    height: 41px;
    border-top: 2px solid #7ab3dd;
    background: #e2e2e2;
    font-size: 21px;
    line-height: 38px;
    color: #2469a6;
    white-space: nowrap;
}

.guide h4 i {
    width: 50px;
    margin-right: 8px;
    background: #569bd2;
    color: #fff;
    font-size: 26px;
    font-weight: 500;
    text-align: center;
}

.guide ol {
    display: flex;
    flex-direction: column;
    gap: 6px;
    padding: 5px 0 8px 83px;
    font-size: 15px;
    line-height: 17px;
    font-weight: 500;
    color: #555;
    white-space: nowrap;
}

.guide ol.last {
    gap: 8px;
}

.guide li {
    position: relative;
}

.guide li i {
    position: absolute;
    left: -25px;
    top: -1px;
    width: 20px;
    height: 20px;
    border-radius: 50%;
    background: #6b6b6b;
    color: #fff;
    font-weight: 700;
    line-height: 19px;
    text-align: center;
}

.guide-foot {
    margin-top: 15px;
    line-height: 18px;
    text-align: center;
}

.guide-foot p + p {
    margin-top: 12px;
}

.guide-foot svg {
    display: inline-block;
    vertical-align: middle;
}

.guide-foot a {
    font-weight: 700;
    text-decoration: underline;
}

/* cloud shortcut */
.cloud {
    position: absolute;
    right: 33px;
    bottom: 12px;
    display: flex;
    flex-direction: column;
    align-items: center;
    width: 218px;
    height: 218px;
    padding: 7px 0;
    border: 2px solid #1c82db;
    border-radius: 3px;
    background: #fff;
    color: #1c82db;
    font-size: 24px;
    font-weight: 700;
    line-height: 36px;
}

.cloud svg {
    margin: 5px 0 12px;
}

.cloud .big {
    font-size: 26px;
}

/* windows taskbar */
.taskbar {
    display: flex;
    align-items: center;
    height: 50px;
    padding-right: 32px;
    background: linear-gradient(90deg, #20383f, #21363f 50%, #1c2b42 78%, #1a2744);
    color: #fff;
}

.start {
    width: 60px;
    padding-left: 20px;
}

.search {
    display: flex;
    align-items: center;
    width: 360px;
    height: 50px;
    padding: 0 4px 0 14px;
    background: #f1f1f1;
    border: 1px solid #bbb;
}

.search input {
    flex: 1;
    min-width: 0;
    margin-left: 14px;
    padding-bottom: 3px;
    background: none;
    font-size: 20px;
}

.search input::placeholder {
    color: #222;
}

.app {
    display: flex;
    align-items: center;
    justify-content: center;
    width: 62px;
    height: 50px;
}

.ring {
    padding-left: 6px;
}

.app.open {
    border-bottom: 3px solid #76b9ed;
}

.app.current {
    background: #4f6168;
}

.app.note {
    width: 52px;
    margin-left: 5px;
}

.weather {
    display: flex;
    align-items: center;
    gap: 10px;
    margin-left: auto;
    font-size: 19px;
}

.tray {
    display: flex;
    gap: 10px;
    margin-left: 30px;
}

.ime {
    width: 20px;
    height: 20px;
    margin-left: 16px;
    background: #fff;
    color: #111;
    font-size: 16px;
    line-height: 19px;
    text-align: center;
}

.clock {
    width: 119px;
    padding-bottom: 2px;
    font-size: 15px;
    line-height: 24px;
    text-align: center;
}

.alarm {
    position: relative;
}

.alarm b {
    position: absolute;
    left: 10px;
    top: 9px;
    width: 20px;
    height: 20px;
    border: 1px solid #999;
    border-radius: 50%;
    background: #2b3038;
    font-size: 14px;
    line-height: 18px;
}
```
